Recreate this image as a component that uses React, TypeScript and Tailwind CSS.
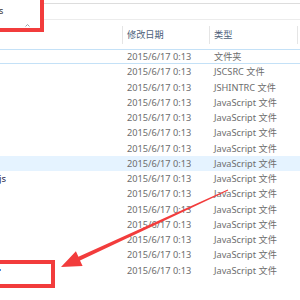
import React from "react";

const JS = "JavaScript 文件";
const rows: { t: string; name?: "js" | "dot" }[] = [
  { t: "文件夹" },
  { t: "JSCSRC 文件" },
  { t: "JSHINTRC 文件" },
  { t: JS },
  { t: JS },
  { t: JS },
  { t: JS },
  { t: JS },
  { t: JS, name: "js" },
  { t: JS },
  { t: JS },
  { t: JS },
  { t: JS },
  { t: JS },
  { t: JS, name: "dot" },
];

export default function App() {
  return (
    <div className="relative w-[300px] h-[300px] overflow-hidden bg-white font-['Noto_Sans','Noto_Sans_CJK_SC',sans-serif] flex flex-col">
      {/* address bar */}
      <div className="flex h-[20px] shrink-0">
        <div className="w-[44px] flex items-start">
          <span className="ml-[-1px] mt-[6px] text-[9px] leading-[10px] text-[#333]">s</span>
        </div>
        <div className="flex-1 mt-[3px] h-[17px] border-t border-b border-t-[#dddddd] border-b-[#ececec]" />
      </div>

      {/* header */}
      <div className="flex h-[29px] shrink-0 text-[9.2px] text-[#4c607a]">
        <div className="w-[122px] flex items-start pl-[25px] pt-[4px]">
          <svg width="5" height="3" viewBox="0 0 5 3">
            <path d="M0.5 2.5 L2.5 0.5 L4.5 2.5" fill="none" stroke="#9aa3ad" strokeWidth="1" />
          </svg>
        </div>
        <div className="w-[87px] flex items-center">
          <div className="w-px h-[18px] bg-[#e5e5e5]" />
          <span className="ml-[4px] leading-none">修改日期</span>
        </div>
        <div className="w-[88px] flex items-center">
          <div className="w-px h-[18px] bg-[#e5e5e5]" />
          <span className="ml-[4px] leading-none">类型</span>
        </div>
        <div className="flex items-center">
          <div className="w-px h-[18px] bg-[#e5e5e5]" />
        </div>
      </div>

      {/* rows */}
      <div className="flex flex-col text-[9.2px] text-[#6d6d6d]">
        {rows.map((r, i) => (
          <div
            key={i}
            className={
              "flex items-center h-[15.25px] " +
              (i === 0 ? "border-t border-b border-[#c4e1f7] " : "") +
              (i === 7 ? "bg-[#e5f3ff] " : "")
            }
          >
            <div className="w-[122px] flex items-center">
              {r.name === "js" && (
                <span className="ml-[-1px] text-[9.5px] leading-none text-[#1c1e50]">js</span>
              )}
              {r.name === "dot" && <div className="w-[1px] h-[2px] bg-[#4a90e2]" />}
            </div>
            <div className="w-[87px] pl-[5px] leading-none whitespace-nowrap">2015/6/17 0:13</div>
            <div className="pl-[5px] leading-none whitespace-nowrap">{r.t}</div>
          </div>
        ))}
      </div>

      {/* annotations */}
      <div className="absolute left-[-10px] top-[-10px] w-[54px] h-[42px] border-[4px] border-[#f23c3c]" />
      <div className="absolute left-[-10px] top-[260px] w-[65px] h-[28px] border-[4px] border-[#f23c3c]" />
      <svg className="absolute left-0 top-0" width="300" height="300" viewBox="0 0 300 300">
        <polygon
          fill="#f23c3c"
          points="227.8,189.5 78.4,256.8 75.9,251.3 61,267 82.6,265.9 80.0,260.4 228.2,190.5"
        />
      </svg>
    </div>
  );
}
